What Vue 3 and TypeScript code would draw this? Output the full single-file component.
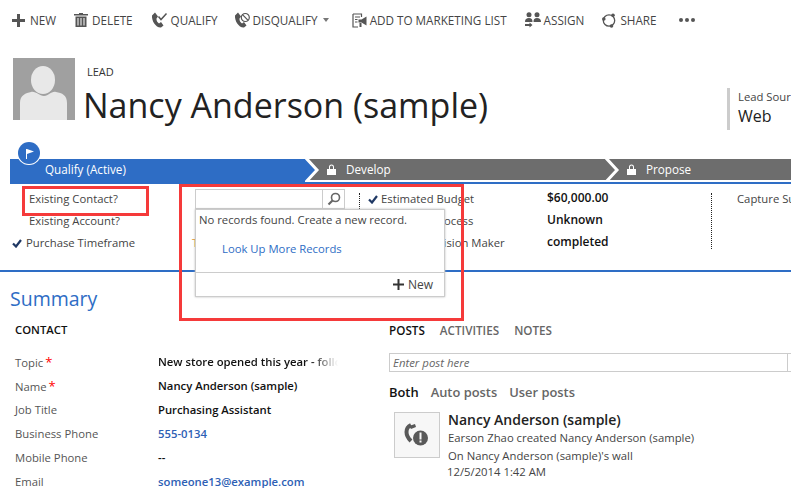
<script setup lang="ts">
const rowsLeft = [
  { label: 'Existing Contact?', check: false },
  { label: 'Existing Account?', check: false },
  { label: 'Purchase Timeframe', check: true },
]
const rowsMid = [
  { label: 'Estimated Budget', value: '$60,000.00', check: true },
  { label: 'Purchase Process', value: 'Unknown', check: false },
  { label: 'Identify Decision Maker', value: 'completed', check: false },
]
const contact = [
  { label: 'Topic', value: 'New store opened this year - follow up', req: true, kind: 'fade' },
  { label: 'Name', value: 'Nancy Anderson (sample)', req: true, kind: '' },
  { label: 'Job Title', value: 'Purchasing Assistant', req: false, kind: '' },
  { label: 'Business Phone', value: '555-0134', req: false, kind: 'link' },
  { label: 'Mobile Phone', value: '--', req: false, kind: '' },
  { label: 'Email', value: 'someone13@example.com', req: false, kind: 'link' },
]
const phone = 'M4 0.500 L7 4.500 L5.500 6.500 C5.200 8.500 6.500 10.500 8 11.500 L10 10 L12.500 13.500 L10 15.500 C5 16 0.500 9 1 3.500 Z'
</script>

<template>
  <div class="page">
    <div class="toolbar">
      <div class="cmd">
        <svg width="13" height="13" viewBox="0 0 13 13"><path d="M5 0h3v5h5v3H8v5H5V8H0V5h5z" fill="#555" /></svg>
        <span>NEW</span>
      </div>
      <div class="cmd del">
        <svg width="14" height="14" viewBox="0 0 14 14"><path d="M5 0h4v1h5v1.500H0V1h5zM1.500 3.500h11V14h-11zM3.500 5v7.500h1V5zM6.500 5v7.500h1V5zM9.500 5v7.500h1V5z" fill="#555" fill-rule="evenodd" /></svg>
        <span>DELETE</span>
      </div>
      <div class="cmd tight qualify">
        <svg width="17" height="16" viewBox="0 0 17 16">
          <path :d="phone" fill="#555" />
          <path d="M7.500 4.500l2.500 3L15.500 1.500" fill="none" stroke="#555" stroke-width="1.500" />
        </svg>
        <span>QUALIFY</span>
      </div>
      <div class="cmd tight">
        <svg width="16" height="16" viewBox="0 0 16 16">
          <path :d="phone" fill="#555" />
          <circle cx="11.300" cy="5.500" r="4" fill="#fff" stroke="#555" stroke-width="1.200" />
          <path d="M8.500 2.700l5.600 5.600" stroke="#555" stroke-width="1.200" />
        </svg>
        <span>DISQUALIFY</span>
        <i class="caret"></i>
      </div>
      <div class="cmd tight list">
        <svg width="15" height="15" viewBox="0 0 15 15">
          <path d="M1 1h8.500v3M1 1v13h5" fill="none" stroke="#555" stroke-width="1.200" />
          <path d="M3 4h5M3 6.500h2.500M3 9h2.500" stroke="#555" stroke-width="1" />
          <path d="M6.500 6.500h3l5-3v9l-5-3h-3zM7.500 10h2v4h-2z" fill="#555" />
        </svg>
        <span>ADD TO MARKETING LIST</span>
      </div>
      <div class="cmd tight">
        <svg width="16" height="16" viewBox="0 0 16 16">
          <circle cx="4" cy="2.700" r="2.500" fill="#555" />
          <circle cx="12" cy="2.700" r="2.500" fill="#555" />
          <path d="M0 10c0-3 1.500-4 4-4s3.500 1 3.500 4zM8.500 10c0-3 1-4 3.500-4s4 1 4 4z" fill="#555" />
          <path d="M0 12h4.500V10.500l3 2.500-3 2.500V14H0z" fill="#555" />
        </svg>
        <span>ASSIGN</span>
      </div>
      <div class="cmd share">
        <svg width="14" height="15" viewBox="0 0 14 15">
          <circle cx="7" cy="7.500" r="5.700" fill="none" stroke="#555" stroke-width="1.300" />
          <circle cx="1.800" cy="6" r="1.800" fill="#555" />
          <circle cx="11" cy="2.300" r="1.800" fill="#555" />
          <circle cx="9.500" cy="13" r="1.800" fill="#555" />
        </svg>
        <span>SHARE</span>
      </div>
      <div class="more"><i></i><i></i><i></i></div>
    </div>

    <div class="head">
      <svg class="avatar" width="62" height="62" viewBox="0 0 62 62">
        <rect width="62" height="62" fill="#a0a0a0" />
        <ellipse cx="30" cy="22" rx="12" ry="14" fill="#e8e8e8" />
        <path d="M7 62V45c0-8 6-10 11-11 5-1 8 4 13 4s7-5 12-4c6 1 11 3 11 11v17z" fill="#e8e8e8" />
      </svg>
      <div class="title">
        <div class="entity">LEAD</div>
        <h1>Nancy Anderson (sample)</h1>
      </div>
      <div class="headfield">
        <div class="hf-label">Lead Source</div>
        <div class="hf-value">Web</div>
      </div>
    </div>

    <div class="process">
      <div class="stage active">
        <span class="flag">
          <svg width="11" height="11" viewBox="0 0 11 11"><path d="M2 1h1v10H2zM3 1l7 2.500L3 6z" fill="#fff" /></svg>
        </span>
        <span>Qualify (Active)</span>
      </div>
      <div class="stage">
        <svg class="chev" width="18" height="23" viewBox="0 0 18 23"><path d="M0 0L11 11L0 23z" fill="#2e6dc5" /><path d="M1 -1L12 11L0 24" fill="none" stroke="#fff" stroke-width="3" /></svg>
        <svg class="lock" width="9" height="11" viewBox="0 0 9 11"><path d="M0 5h9v6H0zM2 5V3a2.500 2.500 0 0 1 5 0v2H6V3a1.500 1.500 0 0 0-3 0v2z" fill="#fff" /></svg>
        <span>Develop</span>
      </div>
      <div class="stage last">
        <svg class="chev" width="18" height="23" viewBox="0 0 18 23"><path d="M1 -1L12 11L0 24" fill="none" stroke="#fff" stroke-width="3" /></svg>
        <svg class="lock" width="9" height="11" viewBox="0 0 9 11"><path d="M0 5h9v6H0zM2 5V3a2.500 2.500 0 0 1 5 0v2H6V3a1.500 1.500 0 0 0-3 0v2z" fill="#fff" /></svg>
        <span>Propose</span>
      </div>
    </div>

    <div class="fields">
      <div class="col col-a">
        <div v-for="r in rowsLeft" :key="r.label" class="frow" :class="{ checked: r.check }">
          <svg v-if="r.check" class="tick" width="10" height="9" viewBox="0 0 10 9"><path d="M1 4.500l3 3L9 1" fill="none" stroke="#1f3864" stroke-width="2.200" /></svg>
          <span>{{ r.label }}</span>
        </div>
      </div>
      <div class="col col-b">
        <div class="frow"></div>
        <div class="frow"></div>
        <div class="frow warn">T</div>
      </div>
      <div class="col col-c">
        <div v-for="r in rowsMid" :key="r.label" class="frow mid">
          <span class="mid-label">
            <svg v-if="r.check" class="tick" width="10" height="9" viewBox="0 0 10 9"><path d="M1 4.500l3 3L9 1" fill="none" stroke="#1f3864" stroke-width="2.200" /></svg>
            <span>{{ r.label }}</span>
          </span>
          <b>{{ r.value }}</b>
        </div>
      </div>
      <div class="col col-d">
        <div class="frow">Capture Summary</div>
      </div>
    </div>

    <div class="summary">
      <h2>Summary</h2>
      <div class="columns">
        <div class="contact">
          <div class="sec">CONTACT</div>
          <div class="crows">
            <div v-for="c in contact" :key="c.label" class="crow">
              <span class="clabel">{{ c.label }}<em v-if="c.req">*</em></span>
              <span class="cvalue" :class="c.kind">{{ c.value }}</span>
            </div>
          </div>
        </div>
        <div class="social">
          <div class="tabs">
            <span class="on">POSTS</span><span>ACTIVITIES</span><span>NOTES</span>
          </div>
          <div class="postbox"><span>Enter post here</span></div>
          <div class="filters">
            <span class="on">Both</span><span>Auto posts</span><span>User posts</span>
          </div>
          <div class="post">
            <div class="thumb">
              <svg width="26" height="24" viewBox="0 0 26 24">
                <path d="M7 2 C1 5 1 12 7 18" fill="none" stroke="#595959" stroke-width="4" />
                <path d="M5 3l6-2 1 3-5 2z" fill="#595959" />
                <circle cx="16.500" cy="15" r="7.500" fill="#595959" />
                <path d="M15.500 9.500h2v7h-2zM15.500 17.500h2v2h-2z" fill="#f7f7f7" />
              </svg>
            </div>
            <div class="post-text">
              <div class="post-name">Nancy Anderson (sample)</div>
              <div>Earson Zhao created Nancy Anderson (sample)</div>
              <div>On Nancy Anderson (sample)'s wall</div>
              <div class="post-date">12/5/2014 1:42 AM</div>
            </div>
          </div>
        </div>
      </div>
    </div>

    <div class="flyout">
      <div class="lookup">
        <span class="lookup-btn">
          <svg width="14" height="14" viewBox="0 0 14 14"><circle cx="8.500" cy="5.500" r="4" fill="none" stroke="#666" stroke-width="1.600" /><path d="M5.500 8.500L1.500 12.500" stroke="#666" stroke-width="2.200" /></svg>
        </span>
      </div>
      <div class="panel">
        <div class="none">No records found. Create a new record.</div>
        <div class="more-link">Look Up More Records</div>
        <div class="panel-foot">
          <svg width="11" height="11" viewBox="0 0 11 11"><path d="M4.500 0h2v4.500H11v2H6.500V11h-2V6.500H0v-2h4.500z" fill="#333" /></svg>
          <span>New</span>
        </div>
      </div>
    </div>
    <div class="mark mark-a"></div>
    <div class="mark mark-b"></div>
  </div>
</template>

<style>
html, body { margin: 0; background: #fff; }
</style>

<style scoped>
.page {
  position: relative;
  width: 791px;
  height: 488px;
  overflow: hidden;
  background: #fff;
  color: #444;
  font-family: "Open Sans", "Noto Sans", sans-serif;
  font-size: 11.3px;
}
.toolbar {
  display: flex;
  align-items: center;
  height: 40px;
  padding-left: 12px;
  font-size: 11.7px;
  white-space: nowrap;
}
.cmd { display: flex; align-items: center; gap: 5px; margin-right: 18px; color: #444; }
.cmd.del { gap: 4px; }
.cmd.tight { gap: 3px; }
.cmd.qualify { margin-right: 16px; }
.cmd.share { gap: 4px; }
.cmd.list { margin-left: 5px; }
.caret {
  width: 0; height: 0; margin-left: 2px;
  border-left: 3.5px solid transparent; border-right: 3.5px solid transparent;
  border-top: 4px solid #777;
}
.more { display: flex; gap: 2px; margin-left: 4px; }
.more i { width: 4px; height: 4px; border-radius: 50%; background: #555; }

.head { display: flex; height: 90px; padding: 18px 0 0 13px; box-sizing: border-box; }
.avatar { flex: none; }
.title { margin-left: 8px; width: 644px; flex: none; }
.entity { margin: 6px 0 0 4px; font-size: 11px; line-height: 16px; color: #333; }
h1 {
  margin: 4px 0 0; font-size: 34px; font-weight: 400; line-height: 42px; color: #222; white-space: nowrap;
}
.headfield { flex: none; margin-top: 30px; padding-left: 8px; border-left: 3px solid #ccc; height: 42px; white-space: nowrap; }
.hf-label { font-size: 11.3px; line-height: 18px; color: #444; }
.hf-value { font-size: 16px; line-height: 20px; color: #222; }

.process {
  display: flex;
  height: 21px;
  margin: 29px 0 0 10px;
  border-bottom: 2px solid #fff;
  box-shadow: 0 2px 0 #2e6dc5;
  color: #fff;
  font-size: 11.7px;
  line-height: 21px;
  white-space: nowrap;
}
.stage {
  position: relative;
  display: flex;
  align-items: center;
  width: 300px;
  background: #6d6d6d;
}
.stage.active { width: 296px; padding-left: 35px; box-sizing: border-box; background: #2e6dc5; box-shadow: 0 2px 0 #2e6dc5; }
.stage.last { flex: 1; }
.stage:not(.active) .lock { margin: 0 10px 0 21px; }
.chev { position: absolute; left: -1px; top: 0; }
.flag {
  position: absolute; left: 8px; top: -17px;
  display: flex; align-items: center; justify-content: center;
  width: 22px; height: 22px;
  border-radius: 50%; background: #2e6dc5;
  box-shadow: 0 0 0 1px #fff;
}

.fields { display: flex; height: 90px; padding-top: 4px; box-sizing: border-box; border-bottom: 2px solid #2e6dc5; }
.col { position: relative; flex: none; padding-top: 2px; box-sizing: border-box; }
.col-a { width: 192px; padding-left: 29px; }
.col-b { width: 167px; }
.col-c { width: 352px; padding-left: 7px; }
.col-d { padding-left: 26px; white-space: nowrap; }
.col-c::before, .col-d::before {
  content: "";
  position: absolute; left: 0; top: 7px; height: 56px;
  border-left: 1px dotted #222;
}
.frow { position: relative; height: 22px; line-height: 22px; white-space: nowrap; color: #444; }
.frow.checked { margin-left: -3px; }
.frow .tick { position: absolute; left: -14px; top: 7px; }
.frow.warn { color: #e0902a; }
.frow.mid { display: flex; }
.mid-label { position: relative; display: block; width: 181px; padding-left: 15px; box-sizing: border-box; }
.mid-label .tick { position: absolute; left: 2px; top: 7px; }
.frow b { margin-top: -1px; font-size: 12px; font-weight: 600; color: #111; }

.summary { padding-left: 10px; }
h2 { margin: 13px 0 0; font-size: 19.5px; font-weight: 400; line-height: 28px; color: #2e6dc5; }
.columns { display: flex; }
.contact { flex: none; width: 379px; padding-left: 5px; box-sizing: border-box; }
.sec { margin-top: 8px; font-weight: 600; line-height: 18px; color: #111; }
.crows { margin-top: 11px; }
.crow { display: flex; height: 24px; line-height: 24px; white-space: nowrap; }
.clabel { width: 143px; flex: none; color: #555; }
.clabel em { margin-left: 2px; color: #f00; font-style: normal; font-size: 13px; }
.cvalue { font-weight: 600; color: #111; }
.cvalue.link { color: #2e5fb5; }
.cvalue.fade {
  width: 180px; overflow: hidden;
  -webkit-mask-image: linear-gradient(90deg, #000 85%, transparent);
  mask-image: linear-gradient(90deg, #000 85%, transparent);
}

.social { flex: none; width: 402px; margin-top: 8px; }
.tabs { display: flex; gap: 15px; font-size: 11.7px; font-weight: 600; line-height: 18px; color: #666; }
.tabs .on, .filters .on { color: #111; }
.postbox {
  height: 19px; margin-top: 14px; box-sizing: border-box; width: 410px;
  border: 1px solid #ccc; padding-left: 3px;
  font-style: italic; font-size: 11.4px; line-height: 17px; color: #666;
  position: relative;
}
.postbox::after { content: ""; position: absolute; left: 397px; top: 0; bottom: 0; border-left: 1px solid #ccc; }
.filters { display: flex; gap: 12px; margin-top: 11px; font-size: 12.9px; font-weight: 600; line-height: 18px; color: #666; }
.post { display: flex; margin-top: 11px; margin-left: 5px; }
.thumb {
  flex: none; width: 46px; height: 46px; box-sizing: border-box;
  display: flex; align-items: center; justify-content: center;
  border: 1px solid #ccc; background: #f7f7f7;
}
.post-text { margin: -2px 0 0 8px; line-height: 18px; color: #444; white-space: nowrap; }
.post-name { font-size: 14px; font-weight: 600; line-height: 19px; color: #222; }
.post-date { margin: -1px 0 0 -1px; line-height: 15px; }

.flyout { position: absolute; left: 195px; top: 189px; width: 250px; }
.lookup { height: 20px; box-sizing: border-box; border: 1px solid #ccc; width: 150px; display: flex; justify-content: flex-end; background: #fff; }
.lookup-btn { width: 21px; border-left: 1px solid #ccc; display: flex; align-items: center; justify-content: center; }
.panel { height: 88px; box-sizing: border-box; border: 1px solid #ccc; box-shadow: 0 0 2px #bbb; background: #fff; position: relative; }
.none { margin: 2px 0 0 3px; line-height: 16px; color: #444; white-space: nowrap; }
.more-link { margin: 13px 0 0 26px; line-height: 16px; color: #2e6dc5; }
.panel-foot {
  position: absolute; left: 0; right: 0; bottom: 0; height: 23px;
  border-top: 1px solid #ccc;
  display: flex; align-items: center; justify-content: flex-end; gap: 4px; padding-right: 11px;
  color: #444; font-size: 12px;
}
.mark { position: absolute; box-sizing: border-box; border: 3px solid #f53a3a; }
.mark-a { left: 22px; top: 186px; width: 127px; height: 30px; }
.mark-b { left: 179px; top: 184px; width: 285px; height: 137px; }
</style>
